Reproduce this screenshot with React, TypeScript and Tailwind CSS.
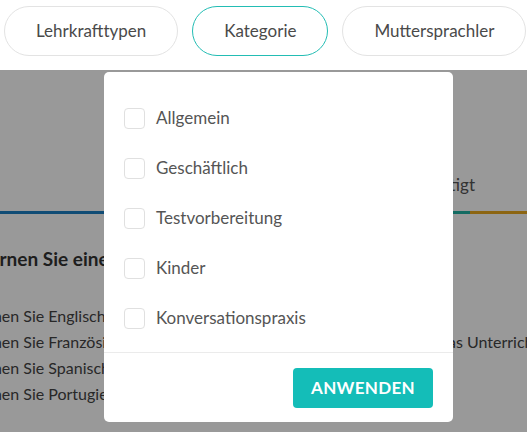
const FILTERS = ['Lehrkrafttypen', 'Kategorie', 'Muttersprachler'];
const CATEGORIES = ['Allgemein', 'Geschäftlich', 'Testvorbereitung', 'Kinder', 'Konversationspraxis'];
const LINKS = ['Lernen Sie Englisch', 'Lernen Sie Französisch', 'Lernen Sie Spanisch', 'Lernen Sie Portugiesisch'];

export default function App() {
  return (
    <div className="relative h-[432px] w-[527px] overflow-hidden bg-white font-['Lato',sans-serif] text-[#444]">
      {/* filter pills */}
      <div className="flex h-[70px] items-start gap-[14px] pl-[4px] pt-[6px]">
        {FILTERS.map((f) => (
          <button
            key={f}
            className={
              'h-[50px] shrink-0 rounded-full border bg-white px-[31px] text-[17px] text-[#4a4a4a] ' +
              (f === 'Kategorie' ? 'border-[#23bdb4]' : 'border-[#e3e3e3]')
            }
          >
            {f}
          </button>
        ))}
      </div>

      {/* page content behind overlay */}
      <div className="flex flex-col">
        <div className="flex h-[141px] items-end justify-end pb-[14px] pr-[52px]">
          <span className="text-[17px] text-[#555]">Bestätigt</span>
        </div>
        <div className="flex h-[3px]">
          <div className="w-[452px] bg-[#1b7fc4]" />
          <div className="w-[18px] bg-[#21b3a3]" />
          <div className="flex-1 bg-[#e9a91f]" />
        </div>
        <div className="ml-[-20px] mt-[31px] text-[19px] font-bold text-[#333]">Lernen Sie eine Sprache</div>
        <div className="mt-[30px] flex">
          <div className="ml-[-29px] flex w-[468px] shrink-0 flex-col gap-[2px] text-[16px] leading-[24px] text-[#444]">
            {LINKS.map((l) => (
              <span key={l}>{l}</span>
            ))}
          </div>
          <div className="mt-[26px] whitespace-nowrap text-[16px] leading-[24px] text-[#444]">das Unterrichten</div>
        </div>
      </div>

      {/* overlay */}
      <div className="absolute inset-x-0 bottom-0 top-[70px] bg-black/40" />

      {/* dropdown */}
      <div className="absolute left-[104px] top-[72px] flex h-[350px] w-[349px] flex-col rounded-[5px] bg-white">
        <div className="flex flex-col pt-[21px]">
          {CATEGORIES.map((c) => (
            <label key={c} className="flex h-[50px] items-center gap-[11px] pl-[20px]">
              <span className="h-[21px] w-[21px] rounded-[4px] border border-[#e0e0e0] bg-white" />
              <span className="text-[17px] text-[#555]">{c}</span>
            </label>
          ))}
        </div>
        <div className="mt-[9px] border-t border-[#ebebeb]" />
        <div className="flex flex-1 items-start justify-end pr-[20px] pt-[15px]">
          <button className="h-[40px] w-[140px] rounded-[4px] bg-[#14bdb8] text-[17px] font-bold tracking-[0.3px] text-white">
            ANWENDEN
          </button>
        </div>
      </div>
    </div>
  );
}
